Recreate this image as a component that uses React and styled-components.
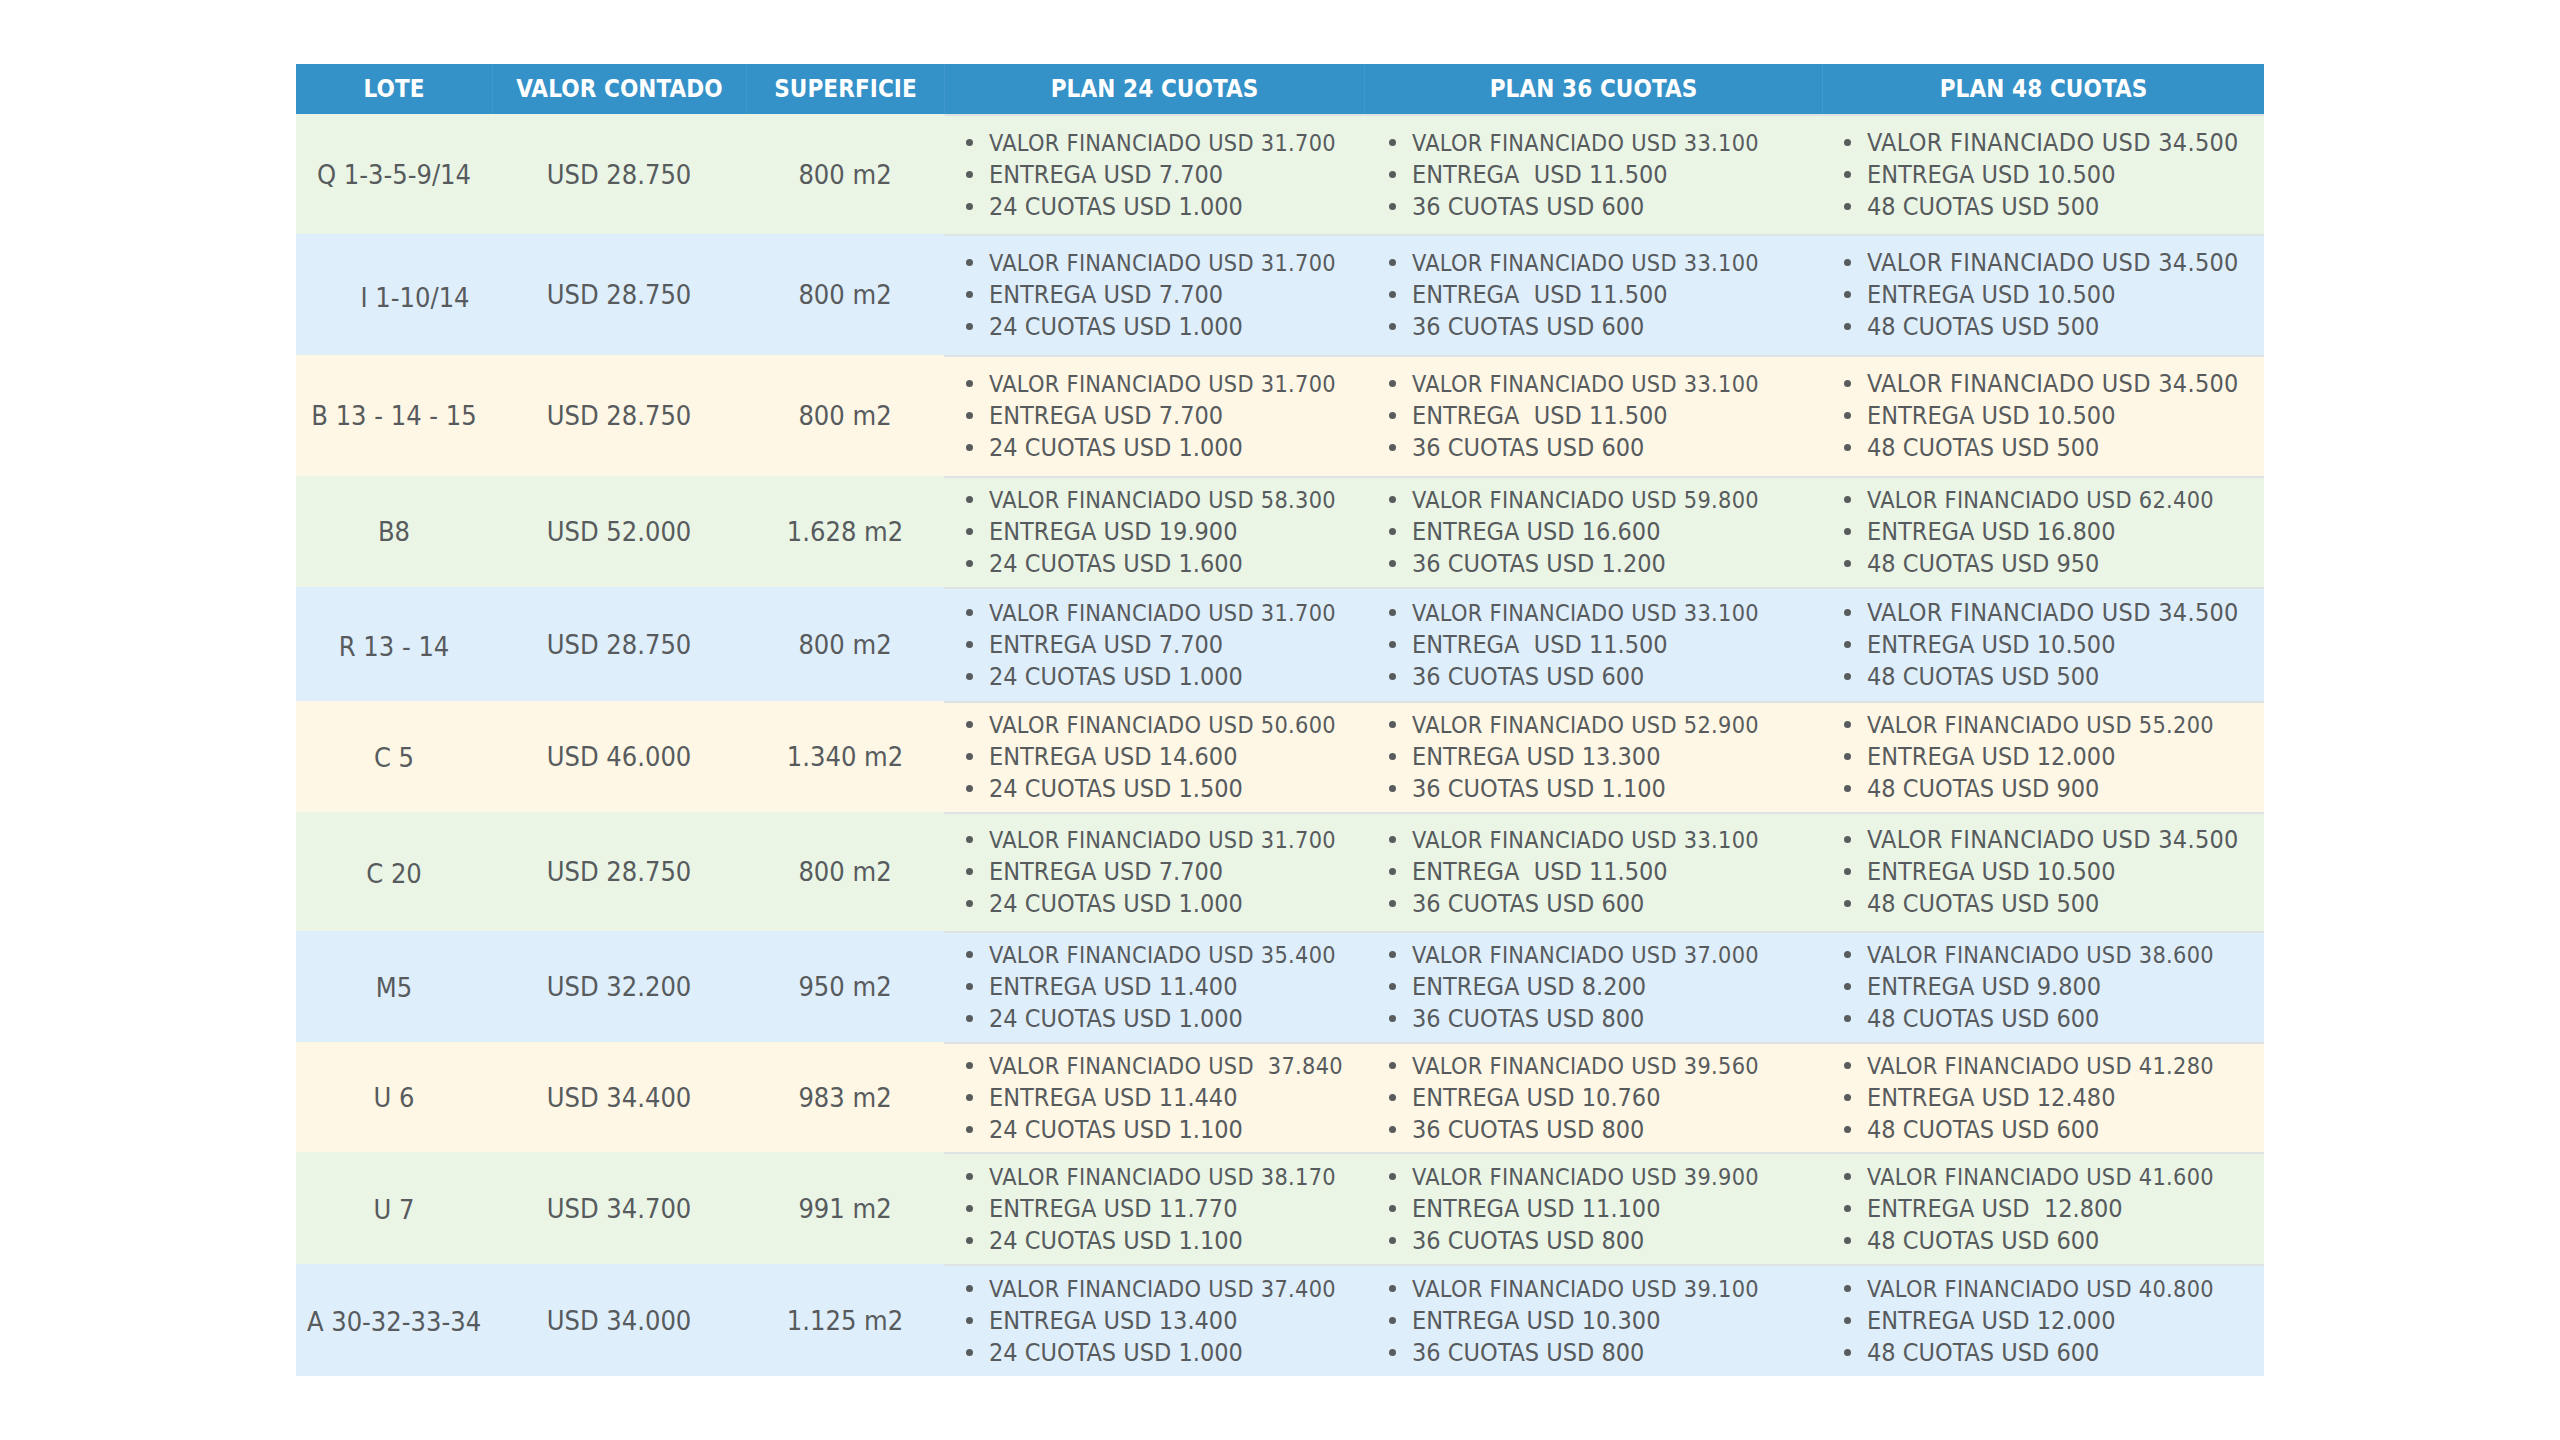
import React from "react";
import styled, { createGlobalStyle } from "styled-components";

const GlobalStyle = createGlobalStyle`
  html, body {
    margin: 0;
    padding: 0;
    background: #ffffff;
  }
  body {
    font-family: "DejaVu Sans Condensed", "DejaVu Sans", sans-serif;
    font-stretch: condensed;
    color: #575b5d;
  }
`;

const COLS = "196px 254px 198px 420px 458px 442px";

const BG = {
  green: "#eaf5e6",
  blue: "#dfeefb",
  yellow: "#fef7e5",
};

const Page = styled.div`
  padding: 64px 0 64px 296px;
`;

const Table = styled.div`
  width: 1968px;
  display: flex;
  flex-direction: column;
`;

const HeaderRow = styled.div`
  display: grid;
  grid-template-columns: ${COLS};
  height: 50px;
  background: #3592c8;
`;

const HeadCell = styled.div`
  display: flex;
  align-items: center;
  justify-content: center;
  color: #ffffff;
  font-weight: bold;
  font-size: 24px;
  letter-spacing: 0.1px;
  border-left: ${(p) => (p.first ? "none" : "1px solid rgba(255,255,255,0.07)")};
`;

const Row = styled.div`
  display: grid;
  grid-template-columns: ${COLS};
  height: ${(p) => p.h}px;
  background: ${(p) => BG[p.tone]};
`;

const Cell = styled.div`
  display: flex;
  align-items: center;
  justify-content: center;
  font-size: 27px;
  white-space: pre;
  padding-left: ${(p) => p.indent || 0}px;
  padding-top: ${(p) => p.drop || 0}px;
`;

const PlanCell = styled.ul`
  margin: 0;
  list-style: none;
  display: flex;
  flex-direction: column;
  justify-content: center;
  padding: 0 0 2px ${(p) => p.inset}px;
  border-top: 2px solid #dde3e4;
`;

const Item = styled.li`
  display: flex;
  align-items: center;
  height: 32px;
  font-size: ${(p) => (p.small ? "23.3px" : "25px")};
  letter-spacing: ${(p) => (p.spaced ? "0.3px" : "0")};
  white-space: pre;

  &::before {
    content: "";
    flex: none;
    width: 7px;
    height: 7px;
    border-radius: 50%;
    background: #585c5d;
    margin-right: 16px;
  }
`;

const std = (a, b, c) => [
  { t: `VALOR FINANCIADO USD ${a}`, small: true, spaced: true },
  { t: b },
  { t: c },
];

const p24 = (a, b, c) => std(a, `ENTREGA USD ${b}`, `24 CUOTAS USD ${c}`);
const p36 = (a, b, c) => std(a, `ENTREGA USD ${b}`, `36 CUOTAS USD ${c}`);
const p48 = (a, b, c) => std(a, `ENTREGA USD ${b}`, `48 CUOTAS USD ${c}`);

const base24 = p24("31.700", "7.700", "1.000");
const base36 = [
  { t: "VALOR FINANCIADO USD 33.100", small: true, spaced: true },
  { t: "ENTREGA  USD 11.500" },
  { t: "36 CUOTAS USD 600" },
];
const base48 = [
  { t: "VALOR FINANCIADO USD 34.500", spaced: true },
  { t: "ENTREGA USD 10.500" },
  { t: "48 CUOTAS USD 500" },
];

const rows = [
  { lote: "Q 1-3-5-9/14", valor: "USD 28.750", sup: "800 m2", tone: "green", h: 120, plans: [base24, base36, base48] },
  { lote: "I 1-10/14", indent: 42, drop: 6, valor: "USD 28.750", sup: "800 m2", tone: "blue", h: 121, plans: [base24, base36, base48] },
  { lote: "B 13 - 14 - 15", valor: "USD 28.750", sup: "800 m2", tone: "yellow", h: 121, plans: [base24, base36, base48] },
  {
    lote: "B8", valor: "USD 52.000", sup: "1.628 m2", tone: "green", h: 111,
    plans: [p24("58.300", "19.900", "1.600"), p36("59.800", "16.600", "1.200"), p48("62.400", "16.800", "950")],
  },
  { lote: "R 13 - 14", drop: 4, valor: "USD 28.750", sup: "800 m2", tone: "blue", h: 114, plans: [base24, base36, base48] },
  {
    lote: "C 5", drop: 2, valor: "USD 46.000", sup: "1.340 m2", tone: "yellow", h: 111,
    plans: [p24("50.600", "14.600", "1.500"), p36("52.900", "13.300", "1.100"), p48("55.200", "12.000", "900")],
  },
  { lote: "C 20", drop: 4, valor: "USD 28.750", sup: "800 m2", tone: "green", h: 119, plans: [base24, base36, base48] },
  {
    lote: "M5", drop: 2, valor: "USD 32.200", sup: "950 m2", tone: "blue", h: 111,
    plans: [p24("35.400", "11.400", "1.000"), p36("37.000", "8.200", "800"), p48("38.600", "9.800", "600")],
  },
  {
    lote: "U 6", valor: "USD 34.400", sup: "983 m2", tone: "yellow", h: 110,
    plans: [p24(" 37.840", "11.440", "1.100"), p36("39.560", "10.760", "800"), p48("41.280", "12.480", "600")],
  },
  {
    lote: "U 7", drop: 2, valor: "USD 34.700", sup: "991 m2", tone: "green", h: 112,
    plans: [p24("38.170", "11.770", "1.100"), p36("39.900", "11.100", "800"), p48("41.600", " 12.800", "600")],
  },
  {
    lote: "A 30-32-33-34", drop: 2, valor: "USD 34.000", sup: "1.125 m2", tone: "blue", h: 112,
    plans: [p24("37.400", "13.400", "1.000"), p36("39.100", "10.300", "800"), p48("40.800", "12.000", "600")],
  },
];

const headers = ["LOTE", "VALOR CONTADO", "SUPERFICIE", "PLAN 24 CUOTAS", "PLAN 36 CUOTAS", "PLAN 48 CUOTAS"];
const insets = [22, 25, 22];

export default function App() {
  return (
    <Page>
      <GlobalStyle />
      <Table>
        <HeaderRow>
          {headers.map((h, i) => (
            <HeadCell key={h} first={i === 0}>
              {h}
            </HeadCell>
          ))}
        </HeaderRow>
        {rows.map((r, i) => (
          <Row key={i} tone={r.tone} h={r.h}>
            <Cell indent={r.indent} drop={r.drop}>{r.lote}</Cell>
            <Cell>{r.valor}</Cell>
            <Cell>{r.sup}</Cell>
            {r.plans.map((plan, j) => (
              <PlanCell key={j} inset={insets[j]}>
                {plan.map((it, k) => (
                  <Item key={k} small={it.small} spaced={it.spaced}>
                    {it.t}
                  </Item>
                ))}
              </PlanCell>
            ))}
          </Row>
        ))}
      </Table>
    </Page>
  );
}
